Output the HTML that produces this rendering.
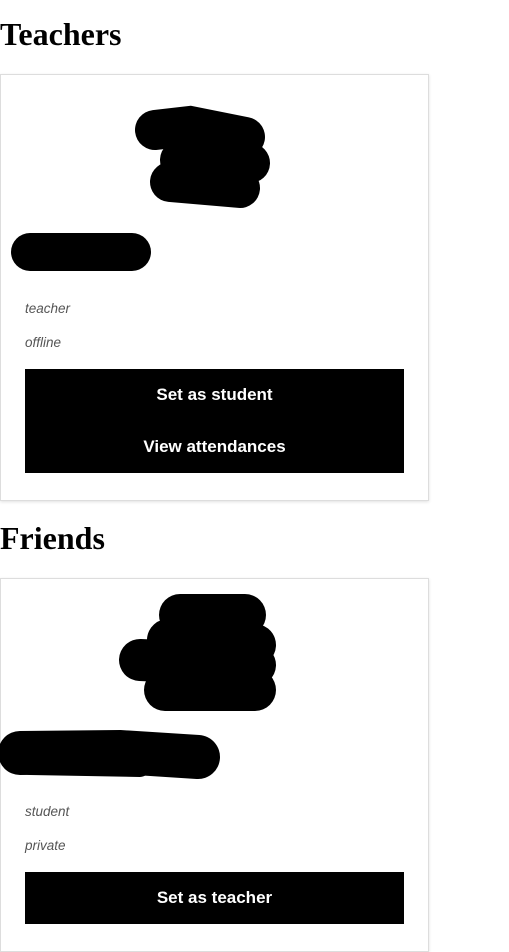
<!DOCTYPE html><html><head><style>
body{margin:0;width:509px;height:952px;position:relative;background:#fff;font-family:"Liberation Sans",sans-serif;overflow:hidden}
h1{position:absolute;left:0;margin:0;font-family:"Liberation Serif",serif;font-size:32px;font-weight:bold;color:#000}
.card{position:absolute;left:0;width:427px;border:1px solid #ddd;box-shadow:0 1px 3px rgba(0,0,0,.12);background:#fff}
.i{position:absolute;left:25px;font-style:italic;font-size:13.5px;color:#555}
.b{position:absolute;left:25px;width:379px;background:#000;color:#fff;font-weight:bold;font-size:17px;text-align:center}
.b div{height:52px;line-height:52px}
svg{position:absolute;left:0;top:0}
</style></head><body>
<h1 style="top:16px">Teachers</h1>
<div class="card" style="top:74px;height:425px"></div>
<svg width="509" height="952">
<g stroke="#000" stroke-linecap="round" fill="none">
<path d="M155 130 L190 126 L245 137" stroke-width="40"/>
<path d="M180 160 L250 163" stroke-width="40"/>
<path d="M170 182 L240 188" stroke-width="40"/>
<path d="M30 252 L132 252" stroke-width="38"/>
<path d="M180 615 L245 615" stroke-width="42"/>
<path d="M168 640 L255 645" stroke-width="42"/>
<path d="M140 660 L255 665" stroke-width="42"/>
<path d="M165 690 L255 690" stroke-width="42"/>
<path d="M20 753 L120 752 L198 757" stroke-width="44"/>
<path d="M30 765 L140 767" stroke-width="20"/>
</g></svg>
<div class="i" style="top:301px">teacher</div>
<div class="i" style="top:335px">offline</div>
<div class="b" style="top:369px"><div>Set as student</div><div>View attendances</div></div>
<h1 style="top:520px">Friends</h1>
<div class="card" style="top:578px;height:372px;z-index:-1"></div>
<div class="i" style="top:804px">student</div>
<div class="i" style="top:838px">private</div>
<div class="b" style="top:872px"><div>Set as teacher</div></div>
</body></html>
